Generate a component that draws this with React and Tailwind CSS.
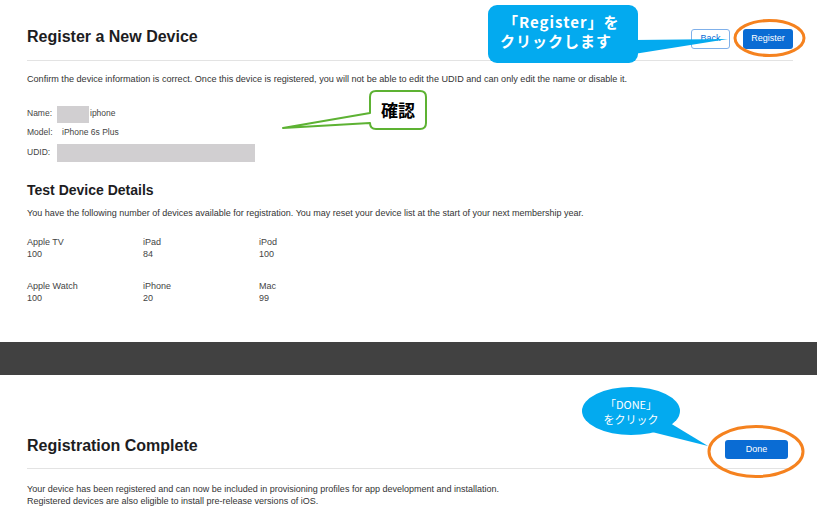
const sans = { fontFamily: '"Liberation Sans", Arial, sans-serif' }
const jp = { fontFamily: '"Noto Sans CJK JP", "Noto Sans", sans-serif' }

const counts = [
  ['Apple TV', '100'],
  ['iPad', '84'],
  ['iPod', '100'],
  ['Apple Watch', '100'],
  ['iPhone', '20'],
  ['Mac', '99'],
]

// Annotation overlay: callouts and orange rings drawn over the screenshot
function Annotations() {
  return (
    <>
      <svg className="absolute inset-0 pointer-events-none" width="817" height="523" viewBox="0 0 817 523">
        {/* blue callout, top */}
        <rect x="488" y="5" width="150" height="58" rx="9" fill="#03aaef" />
        <polygon points="634,40 728,39 634,54" fill="#03aaef" />
        {/* green callout */}
        <path
          d="M376,91 H420 Q426,91 426,97 V123 Q426,129 420,129 H376 Q370,129 370,123 L283,128 L370,113 V97 Q370,91 376,91 Z"
          fill="#fff" stroke="#5db233" strokeWidth="2" strokeLinejoin="round"
        />
        <ellipse cx="769.5" cy="38" rx="34.5" ry="17.5" fill="none" stroke="#f5821f" strokeWidth="3" />
        {/* blue balloon, bottom */}
        <ellipse cx="631" cy="411" rx="49" ry="24" fill="#03aaef" />
        <polygon points="670,423 708,446 652,432" fill="#03aaef" />
        <ellipse cx="756" cy="451.5" rx="47" ry="25" fill="none" stroke="#f5821f" strokeWidth="3" />
      </svg>
      <div className="absolute left-[500px] top-[12px] text-white font-bold text-[15px] leading-[19px] tracking-[1px]" style={jp}>
        <div className="pl-[3px]">「Register」を</div>
        <div>クリックします</div>
      </div>
      <div className="absolute left-[370px] top-[91px] w-[56px] h-[38px] flex items-center justify-center text-black font-bold text-[17px]" style={jp}>
        確認
      </div>
      <div className="absolute left-[582px] top-[397px] w-[98px] text-center text-white text-[11px] leading-[15px]" style={jp}>
        <div>「DONE」</div>
        <div>をクリック</div>
      </div>
    </>
  )
}

export default function App() {
  return (
    <div className="relative w-[817px] h-[523px] overflow-hidden bg-white text-[#333]" style={sans}>
      {/* Register a New Device */}
      <section className="h-[342px] pl-[27px] pr-[24px]">
        <div className="flex justify-between items-start pt-[27px] pb-[11px] border-b border-[#e3e3e3]">
          <h1 className="text-[16px] leading-[20px] font-bold text-[#1d1d1f]">Register a New Device</h1>
          <div className="flex gap-[13px] mt-[2px]">
            <button className="w-[39px] h-[20px] rounded-[3px] border border-[#7fb0ea] text-[#0a6cd4] text-[9px]">Back</button>
            <button className="w-[50px] h-[20px] rounded-[3px] bg-[#0a6cd4] text-white text-[9px]">Register</button>
          </div>
        </div>
        <p className="mt-[12px] text-[9.1px] leading-[12px]">
          Confirm the device information is correct. Once this device is registered, you will not be able to edit the UDID and can only edit the name or disable it.
        </p>
        <div className="mt-[21px] text-[8.5px] text-[#444]">
          <div className="flex items-center h-[17px]">
            <span className="w-[30px] -mt-[2px]">Name:</span>
            <span className="w-[32px] h-[17px] bg-[#d1cfd1]" />
            <span className="ml-[1px] -mt-[2px]">iphone</span>
          </div>
          <div className="flex items-center h-[17px] mt-[1px]">
            <span className="w-[35px]">Model:</span>
            <span>iPhone 6s Plus</span>
          </div>
          <div className="flex items-center h-[18px] mt-[3px]">
            <span className="w-[30px] -mt-[2px]">UDID:</span>
            <span className="w-[198px] h-[18px] bg-[#d1cfd1]" />
          </div>
        </div>
        <h2 className="mt-[18px] text-[14px] leading-[20px] font-bold text-[#1d1d1f]">Test Device Details</h2>
        <p className="mt-[7px] text-[9px] leading-[12px]">
          You have the following number of devices available for registration. You may reset your device list at the start of your next membership year.
        </p>
        <div className="mt-[17px] grid grid-cols-[116px_116px_116px] gap-y-[20px] text-[9px] leading-[12px] text-[#444]">
          {counts.map(([name, n]) => (
            <div key={name}>
              <div>{name}</div>
              <div>{n}</div>
            </div>
          ))}
        </div>
      </section>

      <div className="h-[33px] bg-[#414141]" />

      {/* Registration Complete */}
      <section className="pl-[27px] pr-[29px]">
        <div className="flex justify-between items-start pt-[61px] pb-[9px] border-b border-[#e3e3e3]">
          <h1 className="text-[16px] leading-[20px] font-bold text-[#1d1d1f]">Registration Complete</h1>
          <button className="mt-[4px] w-[63px] h-[19px] rounded-[3px] bg-[#0a6cd4] text-white text-[9px]">Done</button>
        </div>
        <p className="mt-[14px] text-[9px] leading-[12px]">
          Your device has been registered and can now be included in provisioning profiles for app development and installation.
          <br />
          Registered devices are also eligible to install pre-release versions of iOS.
        </p>
      </section>

      <Annotations />
    </div>
  )
}
